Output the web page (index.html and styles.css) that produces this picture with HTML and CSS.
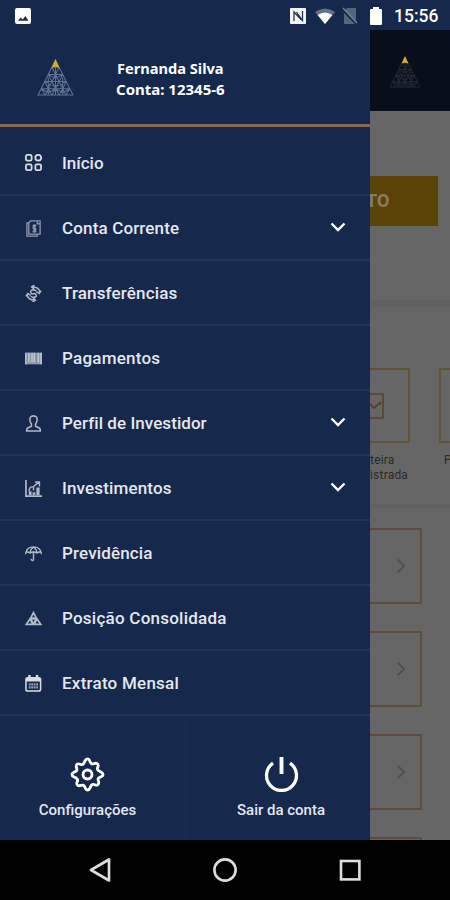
FILE: index.html
```
<!DOCTYPE html>
<html lang="pt-BR">
<head>
<meta charset="utf-8">
<title>Menu</title>
<link rel="stylesheet" href="styles.css">
</head>
<body>
<svg class="defs" aria-hidden="true">
  <symbol id="pyramid" viewBox="0 0 36 38">
    <path d="M18 2 1 36H35ZM14.5 9H21.5M11 16H25M7.5 23H28.5M4.3 30H31.7M14.5 9 18 16 21.5 9M11 16 14.5 23 18 16 21.5 23 25 16M7.5 23 11 30 14.5 23 18 30 21.5 23 25 30 28.5 23M4.3 30 7.8 36 11 30 14.5 36 18 30 21.5 36 25 30 28.2 36 31.7 30M18 9V36M11 19V36M25 19V36M11 16 18 20 25 16M7.5 23 18 28 28.5 23M4.3 30 11 34 18 30 25 34 31.7 30" fill="none" stroke="currentColor" stroke-width="1"/>
    <path class="tip" d="M18 1 14.2 9.5 18 8.6 21.8 9.5Z"/>
  </symbol>
  <symbol id="down" viewBox="0 0 16 10"><path d="m1.5 1.5 6.5 6.5 6.5-6.5" fill="none" stroke="currentColor" stroke-width="2.4"/></symbol>
  <symbol id="right" viewBox="0 0 10 16"><path d="m1.5 1.5 6.5 6.5-6.5 6.5" fill="none" stroke="currentColor" stroke-width="1.7"/></symbol>
</svg>
<header class="status">
  <svg class="s-pic" viewBox="0 0 16 16"><rect width="16" height="16" rx="2" fill="#fff"/><path d="m3 12.7 2.7-3.2 2 2 2.7-3.5 3 4.7Z" fill="#16284b"/></svg>
  <svg class="s-nfc" viewBox="0 0 16 16"><rect width="16" height="16" rx="1" fill="#f4f5f8"/><path d="M4 13V4L11.5 12M12.5 3v9.5L6.5 4" fill="none" stroke="#26334e" stroke-width="1.3"/></svg>
  <svg class="s-wifi" viewBox="0 0 20 17"><path d="M0 4Q10-3 20 4L10 16Z" fill="#65718a"/><path d="M2.6 7Q10 2 17.4 7L10 16Z" fill="#fff"/></svg>
  <svg class="s-sim" viewBox="0 0 16 18"><path d="M5 1H14V17H2V5Z" fill="#56647e"/><path d="m0 2 15 15" stroke="#16284b" stroke-width="3"/><path d="m1 1 14 15" stroke="#77839a" stroke-width="1.4"/></svg>
  <svg class="s-bat" viewBox="0 0 12 18"><path d="M3 0H9V2H11Q12 2 12 3V17Q12 18 11 18H1Q0 18 0 17V3Q0 2 1 2H3Z" fill="#fff"/></svg>
  <span class="clock">15:56</span>
</header>
<main class="main">
  <aside class="drawer">
    <div class="profile">
      <svg class="logo"><use href="#pyramid"/></svg>
      <div class="who"><div class="name">Fernanda Silva</div><div class="acct">Conta: 12345-6</div></div>
    </div>
    <nav class="menu">
      <a class="item first"><svg class="ic bright" viewBox="0 0 18 18"><g fill="none" stroke="currentColor" stroke-width="1.9"><rect x="1" y="1" width="6" height="6" rx="1.5"/><circle cx="14" cy="4" r="3.1"/><rect x="1" y="11" width="6" height="6" rx="1.5"/><rect x="11" y="11" width="6" height="6" rx="1.5"/></g></svg><span class="t1">Início</span></a>
      <a class="item"><svg class="ic dim" viewBox="0 0 18 18"><g fill="none" stroke="currentColor" stroke-width="1.4"><path d="M6 1H16V15H4V3ZM4 3H2V17H13V15M13 1v3h3"/><path d="M12 6H9V9H11V12H8M10 4.5V13.5" stroke-width="1.8"/></g></svg><span class="t2">Conta Corrente</span><svg class="chev"><use href="#down"/></svg></a>
      <a class="item"><svg class="ic" viewBox="0 0 18 18"><g fill="none" stroke="currentColor" stroke-width="1.6"><path d="M2 10Q3 16 10 16M8 13l3 3-3 2M16 8Q15 2 8 2M10 0 7 2l3 3"/><path d="M12 6Q6 4 6 7T9 9.2 12 12Q10 14 6 12M1 12l2-3 3 2M12 7l3 2 2-3"/></g></svg><span class="t3">Transferências</span></a>
      <a class="item"><svg class="ic" viewBox="0 0 18 18"><path d="M0 2.8H18V15.2H0Z" fill="#8f99ae"/><path d="M1 3V15M4 3V13M7.5 3V13M10 3V13M14 3V13M17 3V15" stroke="#c3c9d5" stroke-width="1.4"/><path d="M2.5 3V13M11.8 3V13" stroke="#75819a"/></svg><span class="t4">Pagamentos</span></a>
      <a class="item"><svg class="ic" viewBox="0 0 18 18"><path d="M9 .9C5.8.9 5 3 5.2 5.6 5.3 7.5 6 8.5 6.8 9.5V12L2.5 14Q1.5 15 1.8 17H16.2Q16.5 15 15.5 14L11.2 12V9.5C12 8.5 12.7 7.5 12.8 5.6 13 3 12.2.9 9 .9Z" fill="none" stroke="currentColor" stroke-width="1.7"/></svg><span class="t5">Perfil de Investidor</span><svg class="chev"><use href="#down"/></svg></a>
      <a class="item"><svg class="ic" viewBox="0 0 18 18"><path d="M1 0V17H18" fill="none" stroke="currentColor" stroke-width="1.8"/><path d="M4 16V12H7V16M8 16V13H11V16M12 16V8H15.5V16" fill="currentColor"/><path d="M4.5 12Q4 7 9 7L15 2M10.5 2.2H15.3V7M9 7V11" fill="none" stroke="currentColor" stroke-width="1.5"/></svg><span class="t6">Investimentos</span><svg class="chev"><use href="#down"/></svg></a>
      <a class="item"><svg class="ic" viewBox="0 0 18 18"><g fill="none" stroke="currentColor" stroke-width="1.5"><path d="M.8 8.5Q2 2 9 2T17.2 8.5Q15 6.5 12.8 8.5Q9 6.4 5.2 8.5Q3 6.5.8 8.5ZM5.2 8.5Q6 4 9 2Q12 4 12.8 8.5"/><path d="M9 7V15Q9 16.5 7.5 16.3Q6.5 16.2 6.5 14.5"/></g></svg><span class="t7">Previdência</span></a>
      <a class="item"><svg class="ic" viewBox="0 0 18 18"><path d="M9 2.8 6 8.5H12ZM5.2 9.5 1.3 15.3H8.2ZM12.8 9.5 9.8 15.3H16.7ZM6 9.5H12L9 14.5Z" fill="none" stroke="currentColor" stroke-width="1.8"/></svg><span class="t8">Posição Consolidada</span></a>
      <a class="item"><svg class="ic bright" viewBox="0 0 18 18"><rect x="1" y="3" width="15.5" height="14" rx="2" fill="none" stroke="currentColor" stroke-width="1.6"/><path d="M1 3H16.5V7H1ZM3.5 0H6V4H3.5ZM11.5 0H14V4H11.5Z" fill="currentColor"/><path d="M4 10H14M4 13H14" stroke="currentColor" stroke-width="2.4" stroke-dasharray="2 .6" opacity=".65"/></svg><span class="t9">Extrato Mensal</span></a>
    </nav>
    <footer class="actions">
      <a class="action"><svg class="big" viewBox="0 0 36 36"><g fill="none" stroke="#fff" stroke-width="2.9" stroke-linejoin="round"><path d="M18 2C20.6 2 20.3 6.2 22.2 7S26.8 4.8 28.6 7.4 26.3 11.7 29 13.8 34 15.4 34 18 29.8 20.3 29 22.2 31.2 26.8 28.6 28.6 24.3 26.3 22.2 29 20.6 34 18 34 15.7 29.8 13.8 29 9.2 31.2 7.4 28.6 9.7 24.3 7 22.2 2 20.6 2 18 6.2 15.7 7 13.8 4.8 9.2 7.4 7.4 11.7 9.7 13.8 7 15.4 2 18 2Z"/><circle cx="18" cy="18" r="4.6"/></g></svg><span class="cfg">Configurações</span></a>
      <a class="action exit"><svg class="big" viewBox="0 0 36 36"><path d="M9.3 6.3A15.4 15.4 0 1 0 26.7 6.3" fill="none" stroke="#fff" stroke-width="3.4"/><path d="M18 0V17.5" stroke="#fff" stroke-width="4"/></svg><span class="out">Sair da conta</span></a>
    </footer>
  </aside>
  <section class="page">
    <div class="topbar"><svg class="logo small"><use href="#pyramid"/></svg></div>
    <div class="cta">TO</div>
    <div class="rule r1"></div>
    <div class="tiles">
      <div class="tile-col"><div class="tile"><div class="box"><svg class="tick" viewBox="0 0 12 10"><path d="m0 3 4 4 6-5" fill="none" stroke="#54401e" stroke-width="1.8"/><circle cx="10" cy="2" r="1.6" fill="#54401e"/></svg></div></div><div class="label">teira<br>istrada</div></div>
      <div class="tile-col next"><div class="tile"></div><div class="label">P</div></div>
    </div>
    <div class="rule r2"></div>
    <div class="cards">
      <div class="card"><svg class="go"><use href="#right"/></svg></div>
      <div class="card"><svg class="go"><use href="#right"/></svg></div>
      <div class="card"><svg class="go"><use href="#right"/></svg></div>
      <div class="card"></div>
    </div>
  </section>
</main>
<footer class="keys">
  <svg class="key" viewBox="0 0 24 26"><path d="M21 2.5V23.5L3 13Z" fill="none" stroke="#ddd" stroke-width="2.7" stroke-linejoin="round"/></svg>
  <svg class="key" viewBox="0 0 24 26"><circle cx="12" cy="13" r="10.6" fill="none" stroke="#ddd" stroke-width="2.6"/></svg>
  <svg class="key" viewBox="0 0 24 26"><rect x="3" y="4" width="18.4" height="18.4" fill="none" stroke="#ddd" stroke-width="2.6"/></svg>
</footer>
</body>
</html>
```
FILE: styles.css
```
* { box-sizing: border-box; }
body { margin: 0; width: 450px; height: 900px; overflow: hidden; display: flex; flex-direction: column; background: #000; font-family: Roboto, sans-serif; color: #e4e7ee; }
svg { display: block; flex: none; }
.defs { display: none; }
.status { height: 30px; background: #16284b; display: flex; align-items: center; padding: 2px 11px 0 15px; color: #fff; }
.s-pic { width: 16px; height: 16px; margin-right: auto; }
.s-nfc { width: 16px; height: 16px; margin-right: 9px; }
.s-wifi { width: 20px; height: 17px; margin-right: 7px; }
.s-sim { width: 16px; height: 18px; margin-right: 12px; }
.s-bat { width: 12px; height: 18px; margin-right: 12px; }
.clock { width: 45px; font-size: 17.5px; font-weight: 500; white-space: nowrap; margin-top: -1px; }
.main { height: 810px; display: flex; }
.drawer { width: 370px; background: #16284b; display: flex; flex-direction: column; flex: none; }
.profile { height: 97px; border-bottom: 3px solid #86694f; display: flex; padding: 28px 0 0 37px; }
.logo { width: 37px; height: 39px; color: #617391; }
.tip { fill: #d4ab32; }
.who { margin-left: 43px; font: bold 14.6px/21px "Noto Sans", sans-serif; color: #fff; white-space: nowrap; }
.acct { font-size: 15px; margin-left: -1px; }
.item { height: 65px; border-bottom: 2px solid #213454; display: flex; align-items: center; padding: 2px 24px 0 25px; }
.item.first { height: 69px; padding-top: 4px; }
.ic { width: 17px; height: 17px; color: #b0b8ca; margin-right: 20px; }
.ic.bright { color: #d9dce5; }
.ic.dim { color: #8c98ae; }
.item span { font-size: 17px; font-weight: 500; white-space: nowrap; margin-top: -1px; letter-spacing: .15px; }
.item.first span { margin-top: 0; letter-spacing: 0; }
.item .t4, .item .t8, .item .t9 { letter-spacing: .24px; }
.item .t5 { letter-spacing: .06px; }
.chev { width: 16px; height: 10px; color: #fff; margin-left: auto; margin-top: -4px; }
.actions { flex: 1; display: flex; }
.action { width: 187px; display: flex; flex-direction: column; align-items: center; padding-top: 41px; padding-right: 10px; border-right: 2px solid #1a2c4c; }
.action.exit { width: 183px; padding-right: 0; padding-left: 5px; border: 0; }
.big { width: 35px; height: 35px; }
.action span { font-size: 15px; font-weight: 500; line-height: 20px; margin-top: 8px; white-space: nowrap; }
.page { flex: 1; min-width: 0; background: #666; overflow: hidden; }
.topbar { height: 81px; background: #080f1b; padding: 25px 0 0 19px; }
.small { width: 32px; height: 34px; color: #252c35; }
.small .tip { fill: #8a661b; }
.cta { width: 68px; height: 50px; margin-top: 65px; background: #5b4308; color: #877d66; font-size: 18px; font-weight: 700; line-height: 50px; text-indent: -4px; }
.rule { background: #616161; }
.r1 { height: 7px; margin-top: 74px; }
.r2 { height: 4px; margin-top: 22px; background: #626262; }
.tiles { display: flex; margin-top: 61px; height: 114px; }
.tile-col { width: 40px; flex: none; }
.tile { height: 75px; border: 2px solid #605336; border-left: 0; padding-top: 23px; }
.next { margin-left: 29px; width: 11px; }
.next .tile { border-left: 2px solid #605336; border-right: 0; }
.box { width: 14px; height: 26px; border: 2px solid #584b31; border-left: 0; border-radius: 0 2px 2px 0; padding-top: 6px; }
.tick { width: 12px; height: 10px; }
.label { margin-top: 10px; font-size: 12px; line-height: 15px; letter-spacing: .2px; color: #2a2a2a; white-space: nowrap; }
.next .label { padding-left: 5px; }
.cards { display: flex; flex-direction: column; gap: 27px; margin-top: 20px; }
.card { width: 52px; height: 76px; flex: none; border: 2px solid #5c4e3a; border-left: 0; border-radius: 0 2px 2px 0; display: flex; align-items: center; padding-left: 26px; }
.go { width: 10px; height: 16px; color: #4c4c4c; }
.keys { height: 60px; background: #000; display: flex; justify-content: center; gap: 101px; padding-top: 17px; }
.key { width: 24px; height: 26px; }
```
